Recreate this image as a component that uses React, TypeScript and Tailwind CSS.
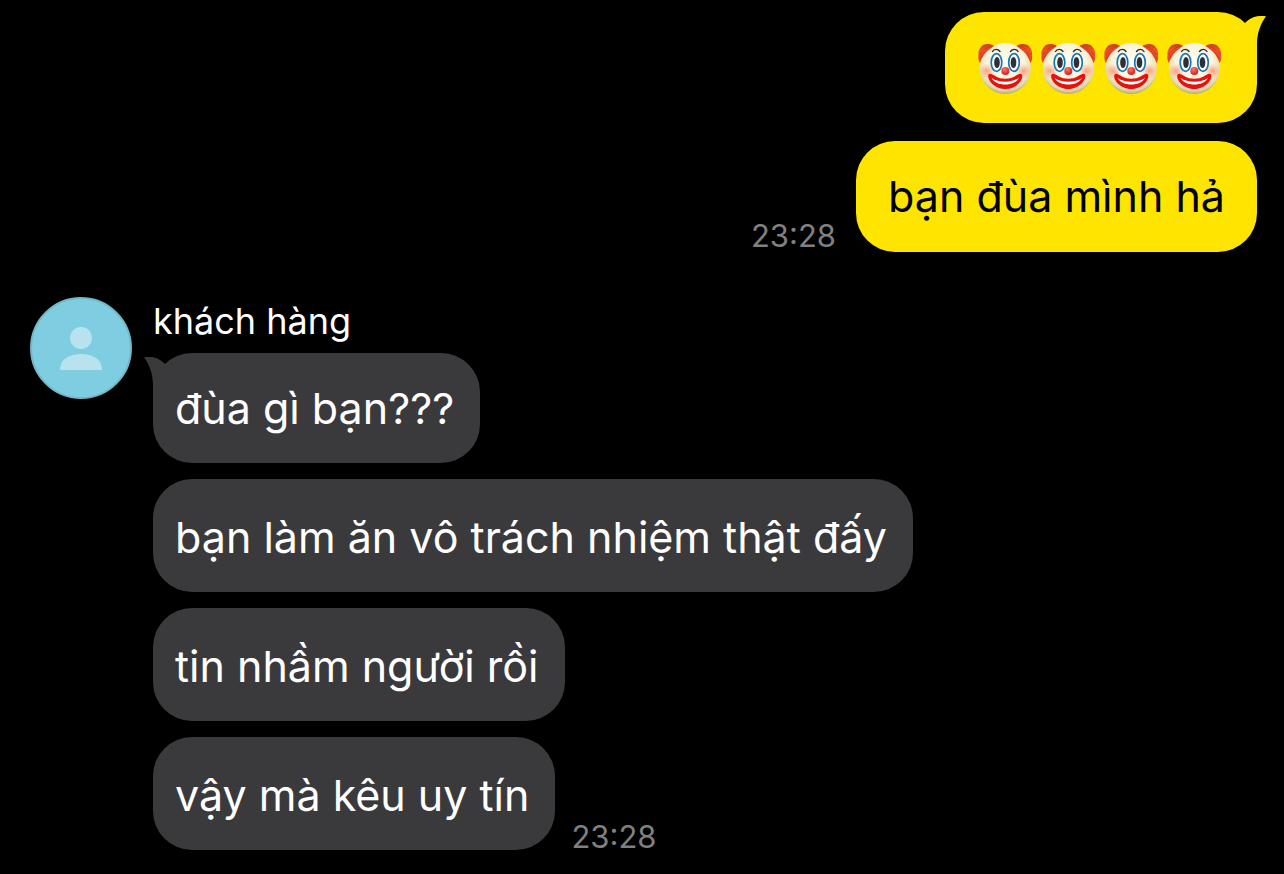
import { useId } from "react";
import clsx from "clsx";

type Side = "mine" | "theirs";

function Tail({ side }: { side: Side }) {
  return (
    <svg
      aria-hidden="true"
      viewBox="0 0 22 36"
      className={clsx(
        "absolute top-1 h-9 w-[22px]",
        side === "mine" ? "-right-[9px] -scale-x-100 text-[#fee500]" : "-left-[9px] text-[#3a3a3c]",
      )}
    >
      <path fill="currentColor" d="M0 0.3C8-.6 15 .8 21 7L22 36H9V28C9 17 5 7 0 .3Z" />
    </svg>
  );
}

function Clown() {
  const id = useId();
  const skin = `${id}-skin`;
  const cheek = `${id}-cheek`;
  const hair = `${id}-hair`;
  const nose = `${id}-nose`;
  return (
    <svg viewBox="0 0 55 52" className="h-[52px] w-[55px]" aria-hidden="true">
      <defs>
        <radialGradient id={skin} cx="0.5" cy="0.4" r="0.62">
          <stop offset="0" stopColor="#fffdf5" />
          <stop offset="0.6" stopColor="#fbf3da" />
          <stop offset="0.85" stopColor="#e5dab0" />
          <stop offset="1" stopColor="#a89a63" />
        </radialGradient>
        <radialGradient id={cheek}>
          <stop offset="0" stopColor="#ff8a68" stopOpacity="0.8" />
          <stop offset="1" stopColor="#ff9a78" stopOpacity="0" />
        </radialGradient>
        <linearGradient id={hair} x1="0" y1="0" x2="0" y2="1">
          <stop offset="0" stopColor="#c9421c" />
          <stop offset="0.35" stopColor="#f0522c" />
          <stop offset="1" stopColor="#e8402a" />
        </linearGradient>
        <radialGradient id={nose} cx="0.4" cy="0.3" r="0.7">
          <stop offset="0" stopColor="#ff7468" />
          <stop offset="1" stopColor="#d21d18" />
        </radialGradient>
      </defs>
      <circle cx="27.300" cy="25.500" r="25.500" fill={`url(#${skin})`} />
      <g fill={`url(#${hair})`}>
        <path d="M13 1.500C9 .5 5 1 3 4 1 6 0 9 .5 12 0 15 .5 18 2 20 3.500 15 7 10 9.500 8L16 3C15 2 14.500 1.800 13 1.500Z" />
        <path d="M41.500 1.500C45.500 .5 49.500 1 51.500 4 53.500 6 54.500 9 54 12 54.500 15 54 18 52.500 20 51 15 47.500 10 45 8L38.500 3C39.500 2 40 1.800 41.500 1.500Z" />
      </g>
      <g fill="none" stroke="#b92a12" strokeWidth="0.8" opacity="0.6">
        <path d="M2 12C5 7 8 5 13 3M2.500 16C5 11 7 8 10 6" />
        <path d="M52.500 12C49.500 7 46.500 5 41.500 3M52 16C49.500 11 47.500 8 44.500 6" />
      </g>
      <ellipse cx="9" cy="28" rx="8" ry="7.500" fill={`url(#${cheek})`} />
      <ellipse cx="45.500" cy="28" rx="8" ry="7.500" fill={`url(#${cheek})`} />
      <g fill="#fffefa" stroke="#1676b8" strokeWidth="1.7">
        <ellipse cx="18.500" cy="19.500" rx="5.300" ry="8.800" />
        <ellipse cx="36" cy="19.500" rx="5.300" ry="8.800" />
      </g>
      <ellipse cx="19" cy="19.500" rx="2.800" ry="5.500" fill="#2d3034" />
      <ellipse cx="35.500" cy="19.500" rx="2.800" ry="5.500" fill="#2d3034" />
      <g fill="none" stroke="#33291f" strokeWidth="1.4" strokeLinecap="round">
        <path d="M14.500 8.500C16 5.800 20 5.600 22 8.500" />
        <path d="M32.500 8.500C34.500 5.600 38.500 5.800 40 8.500" />
      </g>
      <path
        d="M10.500 31.500C12 29.500 15 31.500 18 33.500 23 36.500 31.500 36.500 36.500 33.500 39.500 31.500 42.500 29.500 44 31.500 46 36 39 46 27.300 46S8.500 36 10.500 31.500Z"
        fill="#e5120d"
      />
      <path d="M13.500 35C21 40 33.500 40 41 35 38.500 39.500 33 41.500 27.300 41.500S16 39.500 13.500 35Z" fill="#fff" />
      <circle cx="27.300" cy="28" r="4" fill={`url(#${nose})`} />
    </svg>
  );
}

function Avatar() {
  return (
    <svg viewBox="0 0 102 102" className="size-[102px] shrink-0" role="img" aria-label="khách hàng">
      <circle cx="51" cy="51" r="50" fill="#7ecde1" stroke="#72b7c5" strokeWidth="2" />
      <g fill="#b8e3ee">
        <circle cx="51" cy="41" r="11" />
        <path d="M30 73C30 62 39 57 51 57S72 62 72 73Z" />
      </g>
    </svg>
  );
}

function Time() {
  return <time className="text-[31px] leading-[26px] text-[#808080]">23:28</time>;
}

const replies = ["bạn làm ăn vô trách nhiệm thật đấy", "tin nhầm người rồi"];

export default function App() {
  return (
    <main className="flex min-h-screen flex-col bg-black font-['Inter',sans-serif] text-[43px] leading-[49px] text-white">
      <section className="flex flex-col items-end gap-[18px] pt-3 pr-[27px]">
        <div
          className="relative flex gap-2 rounded-[39px] bg-[#fee500] pt-[31px] pr-[35px] pb-7 pl-[33px]"
          role="img"
          aria-label="🤡🤡🤡🤡"
        >
          <Tail side="mine" />
          <Clown />
          <Clown />
          <Clown />
          <Clown />
        </div>
        <div className="flex items-end gap-5">
          <div className="flex pb-[3px]">
            <Time />
          </div>
          <p className="rounded-[39px] bg-[#fee500] px-8 pt-[31px] pb-[31px] text-black">bạn đùa mình hả</p>
        </div>
      </section>

      <section className="flex gap-[21px] pt-[45px] pb-6 pl-[30px]">
        <Avatar />
        <div className="flex flex-col items-start gap-4">
          <div className="flex flex-col items-start gap-2">
            <h2 className="text-4xl leading-[48px]">khách hàng</h2>
            <p className="relative rounded-[39px] bg-[#3a3a3c] pt-[31px] pr-[26px] pb-[30px] pl-[22px]">
              <Tail side="theirs" />
              <span className="relative">đùa gì bạn???</span>
            </p>
          </div>
          {replies.map((text) => (
            <p key={text} className="rounded-[39px] bg-[#3a3a3c] pt-[34px] pr-[26px] pb-[30px] pl-[22px]">
              {text}
            </p>
          ))}
          <div className="flex items-end gap-4">
            <p className="rounded-[39px] bg-[#3a3a3c] pt-[34px] pr-[26px] pb-[30px] pl-[22px]">vậy mà kêu uy tín</p>
            <Time />
          </div>
        </div>
      </section>
    </main>
  );
}
